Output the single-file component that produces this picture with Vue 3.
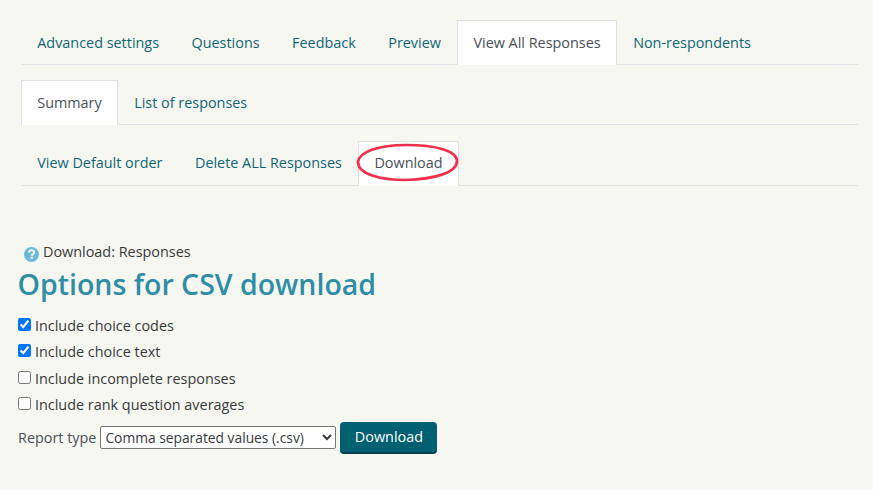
<script setup>
const mainTabs = [
  { label: 'Advanced settings' },
  { label: 'Questions' },
  { label: 'Feedback' },
  { label: 'Preview' },
  { label: 'View All Responses', active: true },
  { label: 'Non-respondents' },
]
const subTabs = [{ label: 'Summary', active: true }, { label: 'List of responses' }]
const actionTabs = [{ label: 'View Default order' }, { label: 'Delete ALL Responses' }, { label: 'Download', active: true, circled: true }]
const rows = [mainTabs, subTabs, actionTabs]
const options = [
  { label: 'Include choice codes', checked: true },
  { label: 'Include choice text', checked: true },
  { label: 'Include incomplete responses', checked: false },
  { label: 'Include rank question averages', checked: false },
]
</script>

<template>
  <div class="page">
    <nav class="navs">
      <ul v-for="(row, i) in rows" :key="i" class="tabs">
        <li v-for="tab in row" :key="tab.label" class="tab" :class="{ active: tab.active }">
          {{ tab.label }}
          <svg v-if="tab.circled" class="ring" width="106" height="42" viewBox="0 0 106 42" fill="none">
            <path d="M2 19C3 9 22 2 50 2C80 2 101 8 101 18C101 30 78 36 50 37C24 37 2 31 2 19Z" stroke="#f2304c" stroke-width="2.7" />
          </svg>
        </li>
      </ul>
    </nav>

    <section class="content">
      <div class="help">
        <svg class="help-icon" width="15" height="15" viewBox="0 0 14 14">
          <circle cx="7" cy="7" r="7" fill="#6cb9dc" />
          <path d="M4.7 5.3C4.8 3.9 5.8 3.1 7.1 3.1C8.5 3.1 9.4 4 9.4 5.1C9.4 6.6 7.2 6.6 7.2 8.2" fill="none" stroke="#f7f7f2" stroke-width="1.9" />
          <rect x="6.2" y="9.1" width="2" height="2" fill="#f7f7f2" />
        </svg>
        <span>Download: Responses</span>
      </div>
      <h2 class="title">Options for CSV download</h2>
      <label v-for="o in options" :key="o.label" class="check">
        <input type="checkbox" :checked="o.checked" />
        <span>{{ o.label }}</span>
      </label>
      <div class="report">
        <span class="report-label">Report type</span>
        <select class="select">
          <option>Comma separated values (.csv)</option>
        </select>
        <button class="btn" type="button">Download</button>
      </div>
    </section>
  </div>
</template>

<style>
html, body { margin: 0; background: #f7f7f2; }
</style>

<style scoped>
.page {
  width: 873px;
  height: 490px;
  overflow: hidden;
  box-sizing: border-box;
  background: #f7f7f2;
  font-family: "Open Sans", sans-serif;
  font-size: 14.4px;
  color: #495057;
  padding: 20px 15px 0 21px;
}
.tabs {
  display: flex;
  list-style: none;
  margin: 0 0 15.4px;
  padding: 0;
  height: 45px;
  box-sizing: border-box;
  border-bottom: 1px solid #dee2e6;
}
.tabs:last-child .tab {
  line-height: 42px;
}
.tab {
  position: relative;
  box-sizing: border-box;
  height: 45px;
  padding: 0 15.25px;
  line-height: 43px;
  border: 1px solid transparent;
  border-bottom: 0;
  color: #0f6674;
  white-space: nowrap;
}
.tab.active {
  background: #fff;
  border-color: #dee2e6;
  color: #495057;
}
.ring {
  position: absolute;
  left: -3px;
  top: 1px;
}
.content {
  margin-left: -3px;
  margin-top: 56px;
}
.help {
  display: flex;
  align-items: flex-start;
  padding-left: 5.5px;
  height: 24px;
  line-height: 19px;
  color: #373a3c;
}
.help-icon {
  margin: 5px 4.5px 0 0;
  flex: none;
}
.title {
  margin: 0 0 10px -0.5px;
  font-size: 28.5px;
  line-height: 36px;
  font-weight: 600;
  color: #2f8ea6;
}
.check {
  display: flex;
  align-items: center;
  height: 26.5px;
  color: #373a3c;
  position: relative;
  top: 0.3px;
}
.check input {
  margin: 0 4px 0 0;
  width: 13px;
  height: 13px;
  position: relative;
  top: -1px;
}
.report {
  display: flex;
  align-items: center;
  margin-top: 3px;
}
.report-label { margin-right: 4px; }
.select {
  width: 236px;
  height: 23px;
  font-family: "Open Sans", sans-serif;
  font-size: 13.8px;
  color: #373a3c;
  background: #fff;
  border: 1px solid #767676;
  border-radius: 2px;
  margin-right: 4px;
}
.btn {
  width: 97px;
  height: 32px;
  margin-top: 1px;
  background: #005f70;
  color: #fff;
  border: 0;
  border-bottom: 2px solid #00404c;
  border-radius: 4px;
  font-family: "Open Sans", sans-serif;
  font-size: 14.4px;
  padding: 0;
}
</style>
